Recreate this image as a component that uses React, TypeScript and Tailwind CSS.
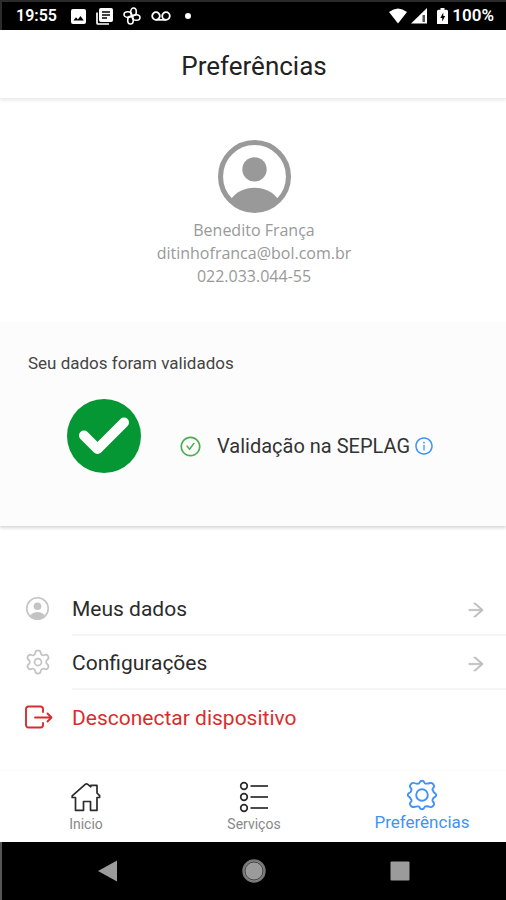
import type { ReactNode } from 'react';
import { Settings } from 'lucide-react';
import { AiOutlineArrowRight, AiOutlineCheckCircle, AiOutlineInfoCircle } from 'react-icons/ai';

type IconProps = { className?: string };

type MenuItem = {
  label: string;
  icon: ReactNode;
  danger?: boolean;
};

type Tab = {
  label: string;
  icon: ReactNode;
  active?: boolean;
};

function AvatarIcon({ className }: IconProps) {
  return (
    <svg viewBox="0 0 72 72" className={className} fill="currentColor" aria-hidden="true">
      <circle cx="36" cy="36" r="33.5" fill="none" stroke="currentColor" strokeWidth="5" />
      <circle cx="36" cy="29" r="12" />
      <path d="M13 58C18 51 26 47 36 47s18 4 23 11c-6 7-14 11-23 11S19 65 13 58Z" />
    </svg>
  );
}

function ValidatedIcon({ className }: IconProps) {
  return (
    <svg viewBox="0 0 74 74" className={className} aria-hidden="true">
      <circle cx="37" cy="37" r="37" fill="#069735" />
      <path
        d="M17 36.500 30.500 50 57 23.500"
        fill="none"
        stroke="#fff"
        strokeWidth="10"
        strokeLinecap="round"
        strokeLinejoin="round"
      />
    </svg>
  );
}

function LogoutIcon({ className }: IconProps) {
  return (
    <svg
      viewBox="0 0 28 24"
      className={className}
      fill="none"
      stroke="currentColor"
      strokeWidth="1.900"
      strokeLinecap="round"
      strokeLinejoin="round"
      aria-hidden="true"
    >
      <path d="M18 7V4a2.500 2.500 0 0 0-2.500-2.500h-12A2.500 2.500 0 0 0 1 4v16a2.500 2.500 0 0 0 2.500 2.500h12A2.500 2.500 0 0 0 18 20v-2" />
      <path d="M10 12.500h16M22.500 8.500l4 4-4 4" />
    </svg>
  );
}

function HomeIcon({ className }: IconProps) {
  return (
    <svg
      viewBox="0 0 30 30"
      className={className}
      fill="none"
      stroke="currentColor"
      strokeWidth="1.700"
      strokeLinejoin="round"
      aria-hidden="true"
    >
      <path d="M4.500 15.500H1.200V13.800L14.200 2.300Q15.500 1.300 16.800 2.300L19.800 4.800V3.300H26V11l2.600 2.700v1.800h-2.600V28.300h-6.500V19.500h-7v8.800H4.500Z" />
    </svg>
  );
}

function ServicesIcon({ className }: IconProps) {
  return (
    <svg viewBox="0 0 30 32" className={className} fill="none" stroke="currentColor" strokeWidth="1.700" aria-hidden="true">
      {[5, 16, 27].map((y) => (
        <g key={y}>
          <circle cx="5" cy={y} r="3.300" />
          <path d={`M11.500 ${y}H29`} />
        </g>
      ))}
    </svg>
  );
}

function GearIcon({ className }: IconProps) {
  return (
    <svg
      viewBox="-16 -16 32 32"
      className={className}
      fill="none"
      stroke="currentColor"
      strokeWidth="1.900"
      strokeLinejoin="round"
      aria-hidden="true"
    >
      <path d="M-3.400-11.400C-1.800-11.600-2.800-14.200 0-14.200S1.800-11.600 3.400-11.400 6.700-11.500 8.100-12 10.100-12 11-11 12.600-9.500 12-8.100 9.800-6.500 10.500-5.200 11.600-3.300 12-2.500 14.200-1.800 14.200 0 13.200 1.800 12 2.500 11.100 4 10.500 5.200 11.500 6.700 12 8.100 11.900 10.200 11 11 9.500 12.600 8.100 12 5 11.200 3.400 11.400 2.800 14.200 0 14.200-1.800 11.600-3.400 11.400-6.700 11.500-8.100 12-10.200 11.900-11 11-12.600 9.500-12 8.100-9.900 6.500-10.500 5.200-11.600 3.300-12 2.500-14.200 1.800-14.200 0-13.200-1.800-12-2.500-11.100-4-10.500-5.200-11.500-6.700-12-8.100-11.900-10.200-11-11-9.500-12.600-8.100-12-5-11.200-3.400-11.400Z" />
      <circle r="5.800" />
    </svg>
  );
}

function StatusBar() {
  return (
    <div className="flex h-[30px] items-center justify-between border-t-2 border-l-2 border-[#2b2b2b] bg-black pr-3 pl-3.5 text-white">
      <div className="flex items-center gap-2.5">
        <span className="mr-1 text-base font-semibold">19:55</span>
        <svg viewBox="0 0 15 15" className="h-[15px] w-[15px]" aria-hidden="true">
          <rect width="15" height="15" rx="2" fill="#fff" />
          <path d="M2.500 11.500 5 8.300l1.800 2.100L9.500 7l3.300 4.500Z" fill="#000" />
        </svg>
        <svg viewBox="0 0 17 17" className="h-[17px] w-[17px]" fill="none" stroke="#fff" aria-hidden="true">
          <path d="M1 4.500V15q0 1 1 1h11" strokeWidth="1.700" />
          <rect x="3.500" y="0.500" width="13" height="13" rx="1" fill="#fff" />
          <path d="M6 4h8M6 7h8M6 10h5" stroke="#000" strokeWidth="1.300" />
        </svg>
        <svg viewBox="0 0 18 18" className="h-[18px] w-[18px]" fill="none" stroke="#fff" strokeWidth="1.600" aria-hidden="true">
          <ellipse cx="10.500" cy="4.800" rx="2.800" ry="3.800" />
          <ellipse cx="13.200" cy="10.500" rx="3.800" ry="2.800" />
          <ellipse cx="7.500" cy="13.200" rx="2.800" ry="3.800" />
          <ellipse cx="4.800" cy="7.500" rx="3.800" ry="2.800" />
        </svg>
        <svg viewBox="0 0 20 11" className="h-[11px] w-5" fill="none" stroke="#fff" strokeWidth="1.800" aria-hidden="true">
          <circle cx="5" cy="5" r="3.800" />
          <circle cx="15" cy="5" r="3.800" />
          <path d="M5 8.800h10" />
        </svg>
        <span className="ml-1 h-1.5 w-1.5 rounded-full bg-white" />
      </div>
      <div className="flex items-center gap-1">
        <svg viewBox="0 0 18 16" className="h-4 w-[18px]" fill="#fff" aria-hidden="true">
          <path d="M0 4Q9-3 18 4L9 15.500Z" />
        </svg>
        <svg viewBox="0 0 16 16" className="h-4 w-4" aria-hidden="true">
          <path d="M0 15.500 16 0v15.500Z" fill="#fff" />
          <path d="M11.500 7h2.500v7h-2.500z" fill="#555" />
        </svg>
        <svg viewBox="0 0 11 16" className="ml-1.5 h-4 w-[11px]" aria-hidden="true">
          <path d="M3.500 0h4v1.700H9.500A1.500 1.500 0 0 1 11 3.200V16H0V3.200A1.500 1.500 0 0 1 1.500 1.700h2Z" fill="#fff" />
          <path d="M6.300 4.500 3.300 10h1.900v3.500l3-5.500H6.300Z" fill="#000" />
        </svg>
        <span className="text-[17px] font-semibold">100%</span>
      </div>
    </div>
  );
}

const MENU: MenuItem[] = [
  { label: 'Meus dados', icon: <AvatarIcon className="h-[23px] w-[23px] text-[#c4c4c4]" /> },
  { label: 'Configurações', icon: <Settings className="h-7 w-7 text-[#c4c4c4]" strokeWidth={1.5} /> },
  { label: 'Desconectar dispositivo', icon: <LogoutIcon className="h-6 w-7" />, danger: true },
];

const TABS: Tab[] = [
  { label: 'Inicio', icon: <HomeIcon className="h-[30px] w-[30px]" /> },
  { label: 'Serviços', icon: <ServicesIcon className="h-8 w-[30px]" /> },
  { label: 'Preferências', icon: <GearIcon className="h-8 w-8" />, active: true },
];

function SystemNav() {
  return (
    <div className="grid h-[58px] grid-cols-3 place-items-center border-l-2 border-[#555] bg-black text-[#9b9b9b]">
      <button type="button" aria-label="Voltar" className="pl-11">
        <svg viewBox="0 0 20 22" className="h-[22px] w-5" fill="currentColor">
          <path d="M0 11 19 0.500v21Z" />
        </svg>
      </button>
      <button type="button" aria-label="Tela inicial">
        <svg viewBox="0 0 24 24" className="h-6 w-6">
          <circle cx="12" cy="12" r="11" fill="#858585" stroke="#777" strokeWidth="1.500" />
          <circle cx="12" cy="12" r="9" fill="#9b9b9b" stroke="#444" />
        </svg>
      </button>
      <button type="button" aria-label="Recentes" className="pr-11">
        <svg viewBox="0 0 20 20" className="h-5 w-5" fill="currentColor">
          <rect x="0.500" y="0.500" width="19" height="19" rx="1" />
        </svg>
      </button>
    </div>
  );
}

export default function App() {
  return (
    <div className="flex min-h-screen flex-col bg-white font-['Roboto',sans-serif] text-[#333]">
      <StatusBar />

      <header className="flex h-[69px] items-center justify-center border-b border-[#ededed] pt-1 pl-0.5 shadow-[0_2px_3px_rgba(0,0,0,0.07)]">
        <h1 className="text-[26px] leading-8 text-[#222]">Preferências</h1>
      </header>

      <main className="flex flex-1 flex-col">
        <section className="flex flex-col items-center pt-[41px] pb-[34px] pl-0.5 text-center font-['Open_Sans',sans-serif] text-base leading-[23px] text-[#999]">
          <AvatarIcon className="mb-1.5 h-[73px] w-[73px]" />
          <p>Benedito França</p>
          <p>ditinhofranca@bol.com.br</p>
          <p>022.033.044-55</p>
        </section>

        <section className="bg-[#fcfcfc] px-7 pt-[29px] pb-[53px] shadow-[0_2px_3px_rgba(0,0,0,0.16)]">
          <h2 className="text-[17px] leading-6 text-[#444]">Seu dados foram validados</h2>
          <div className="mt-6 flex items-center pl-[39px]">
            <ValidatedIcon className="h-[74px] w-[74px] shrink-0" />
            <div className="flex items-center pt-5 pl-[38px]">
              <AiOutlineCheckCircle className="h-[23px] w-[23px] text-[#4cae50]" />
              <span className="ml-[15px] text-xl leading-6">Validação na SEPLAG</span>
              <button type="button" aria-label="Informações" className="ml-1 text-[#3f92f7]">
                <AiOutlineInfoCircle className="h-5 w-5" />
              </button>
            </div>
          </div>
        </section>

        <ul className="mt-14">
          {MENU.map((item) => (
            <li key={item.label}>
              <button
                type="button"
                className={`flex h-[54px] w-full items-center text-left text-[21px] ${item.danger ? 'text-[#d92d2d]' : 'text-[#2b2b2b]'}`}
              >
                <span className={`flex w-[72px] shrink-0 justify-center ${item.danger ? 'pl-1.5' : 'pr-px pb-0.5 pl-1'}`}>
                  {item.icon}
                </span>
                <span
                  className={`flex h-full flex-1 items-center justify-between pt-1 pr-5 ${item.danger ? '' : 'border-b-2 border-[#f5f5f5]'}`}
                >
                  {item.label}
                  {!item.danger && (
                    <AiOutlineArrowRight className="h-5 w-5 text-[#bdbdbd]" stroke="currentColor" strokeWidth={24} />
                  )}
                </span>
              </button>
            </li>
          ))}
        </ul>
      </main>

      <nav className="grid h-[72px] grid-cols-3 border-t border-[#fafafa] pl-0.5">
        {TABS.map((tab) => (
          <a
            key={tab.label}
            href="#"
            className={`flex flex-col items-center leading-5 ${tab.active ? 'pt-2 text-[17px] text-[#3f92f7]' : 'pt-2.5 text-sm text-[#2b2b2b]'}`}
          >
            <span className="flex h-8 items-center">{tab.icon}</span>
            <span className={tab.active ? 'pt-px' : 'pt-px text-[#888]'}>{tab.label}</span>
          </a>
        ))}
      </nav>

      <SystemNav />
    </div>
  );
}
